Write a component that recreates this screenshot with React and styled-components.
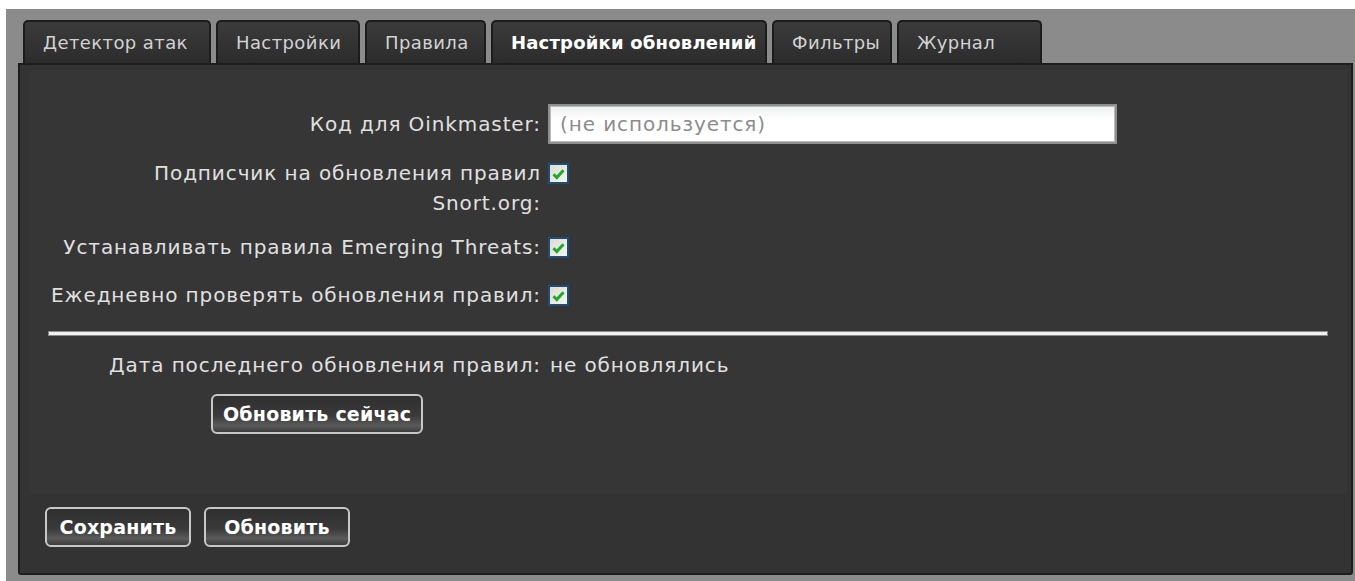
import React, { useState } from 'react'
import styled, { createGlobalStyle } from 'styled-components';

const GlobalStyle = createGlobalStyle`
    html, body {
        margin : 0;
        padding : 0;
        background : #ffffff;
        font-family : "DejaVu Sans", "Liberation Sans", sans-serif;
    }
`;

const Frame = styled.div`
    margin : 9px 0 0 6px;
    height : 572px;
    box-sizing : border-box;
    background : #8b8b8b;
    padding : 11px 2px 6px 12px;
    display : flex;
    flex-direction : column;
`;

const TabBar = styled.div`
    display : flex;
    gap : 5px;
    padding-left : 5px;
`;

const Tab = styled.div`
    width : ${p => p.$width}px;
    height : 43px;
    box-sizing : border-box;
    padding-left : 18px;
    display : flex;
    align-items : center;
    border : 2px solid #1c1c1c;
    border-bottom : none;
    border-radius : 5px 5px 0 0;
    background : linear-gradient(#3b3b3b, #2c2c2c);
    color : ${p => p.$active ? '#ffffff' : '#d2d2d2'};
    font-size : 18px;
    font-weight : ${p => p.$active ? 'bold' : 'normal'};
    letter-spacing : ${p => p.$active ? '0.2px' : '0.4px'};
    white-space : nowrap;
    cursor : pointer;
`;

const Panel = styled.div`
    flex : 1;
    background : #333333;
    border : 2px solid #1d1d1d;
    border-radius : 0 0 3px 3px;
    padding : 5px 4px 0 10px;
    display : flex;
    flex-direction : column;
`;

const Content = styled.div`
    background : #363636;
    height : 423px;
    box-sizing : border-box;
    padding-top : 34px;
`;

const FormGrid = styled.div`
    display : grid;
    grid-template-columns : 511px 1fr;
    column-gap : 7px;
    row-gap : ${p => p.$gap || 0}px;
    align-items : start;
`;

const Label = styled.div`
    text-align : right;
    color : #e0e0e0;
    font-size : 20px;
    letter-spacing : 0.9px;
    line-height : 30px;
    padding-top : ${p => p.$top || 0}px;
`;

const Value = styled.div`
    color : #e0e0e0;
    font-size : 20px;
    letter-spacing : 0.9px;
    line-height : 30px;
    padding-left : 2px;
`;

const TextInput = styled.input`
    width : 569px;
    height : 40px;
    box-sizing : border-box;
    border : 2px solid #8f8f8f;
    outline : 1px solid #bcbcbc;
    outline-offset : -3px;
    background : linear-gradient(#eef0f0, #ffffff 40%);
    padding : 0 10px;
    font-family : inherit;
    font-size : 20px;
    letter-spacing : 0.9px;
    color : #333;
    &::placeholder {
        color : #8c8c8c;
    }
`;

const CheckCell = styled.div`
    padding-top : ${p => p.$top || 0}px;
`;

const CheckBox = styled.span`
    display : inline-flex;
    align-items : center;
    justify-content : center;
    width : 21px;
    height : 21px;
    margin-top : 5px;
    box-sizing : border-box;
    border : 2px solid #1f4d7a;
    background : linear-gradient(135deg, #dcdcd4, #f6f6f2);
    cursor : pointer;
`;

const Rule = styled.div`
    height : 3px;
    margin : 22px 20px 15px 19px;
    background : #f0f0f0;
    box-shadow : 0 0 0 1px #8a8a8a;
`;

const Button = styled.button`
    width : ${p => p.$width ? `${p.$width}px` : 'auto'};
    height : 40px;
    box-sizing : border-box;
    padding : 0 10px;
    border : 2px solid #c8c8c8;
    border-radius : 6px;
    background : linear-gradient(#2f2f2f 0%, #3a3a3a 55%, #5a5a5a 82%, #3c3c3c 100%);
    color : #ffffff;
    font-family : inherit;
    font-size : 19px;
    font-weight : bold;
    letter-spacing : 0.2px;
    cursor : pointer;
`;

const NowRow = styled.div`
    padding-left : 181px;
    margin-top : 14px;
`;

const Footer = styled.div`
    display : flex;
    gap : 13px;
    padding : 14px 0 0 15px;
`;

function Check({ checked, onClick }) {
    return (
        <CheckBox onClick={onClick}>
            {checked &&
                <svg width="13" height="12" viewBox="0 0 13 12">
                    <path d="M1.5 6.2 L4.8 9.6 L11.5 2.2" fill="none" stroke="#1faa2a" strokeWidth="3" />
                </svg>
            }
        </CheckBox>
    )
}

const tabs = [
    { title : 'Детектор атак', width : 188 },
    { title : 'Настройки', width : 144 },
    { title : 'Правила', width : 121 },
    { title : 'Настройки обновлений', width : 276, active : true },
    { title : 'Фильтры', width : 120 },
    { title : 'Журнал', width : 145 },
];

function App() {
    const [flags, setFlags] = useState({ snort : true, et : true, daily : true });
    const toggle = key => setFlags({ ...flags, [key] : !flags[key] });

    return (
        <>
            <GlobalStyle />
            <Frame>
                <TabBar>
                    {tabs.map(t => (
                        <Tab key={t.title} $active={t.active} $width={t.width}>{t.title}</Tab>
                    ))}
                </TabBar>
                <Panel>
                    <Content>
                        <FormGrid $gap={14}>
                            <Label $top={5}>Код для Oinkmaster:</Label>
                            <TextInput placeholder="(не используется)" />

                            <Label>Подписчик на обновления правил<br/>Snort.org:</Label>
                            <CheckCell>
                                <Check checked={flags.snort} onClick={() => toggle('snort')} />
                            </CheckCell>

                            <Label>Устанавливать правила Emerging Threats:</Label>
                            <CheckCell>
                                <Check checked={flags.et} onClick={() => toggle('et')} />
                            </CheckCell>

                            <Label $top={4}>Ежедневно проверять обновления правил:</Label>
                            <CheckCell $top={4}>
                                <Check checked={flags.daily} onClick={() => toggle('daily')} />
                            </CheckCell>
                        </FormGrid>
                        <Rule />
                        <FormGrid>
                            <Label>Дата последнего обновления правил:</Label>
                            <Value>не обновлялись</Value>
                        </FormGrid>
                        <NowRow>
                            <Button>Обновить сейчас</Button>
                        </NowRow>
                    </Content>
                    <Footer>
                        <Button $width={146}>Сохранить</Button>
                        <Button $width={146}>Обновить</Button>
                    </Footer>
                </Panel>
            </Frame>
        </>
    )
}

export default App
